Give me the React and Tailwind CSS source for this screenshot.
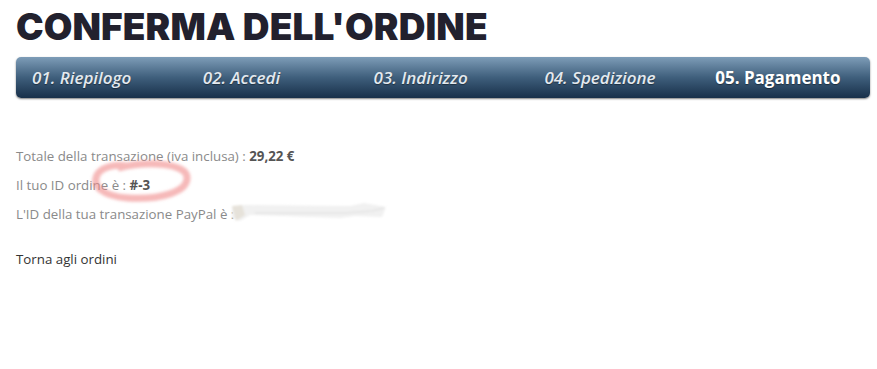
export default function App() {
  const steps = [
    { t: "01. Riepilogo", active: false },
    { t: "02. Accedi", active: false },
    { t: "03. Indirizzo", active: false },
    { t: "04. Spedizione", active: false },
    { t: "05. Pagamento", active: true },
  ];
  const body = { fontFamily: '"Open Sans", "Noto Sans", sans-serif' };
  return (
    <div className="relative w-[877px] h-[369px] bg-white overflow-hidden" style={body}>
      <div className="pl-4 pr-[7px] pt-[8px]">
        <h1
          className="text-[37px] leading-[38px] font-black tracking-[0.1px] text-[#22212e]"
          style={{ fontFamily: 'Inter, "Liberation Sans", sans-serif' }}
        >
          CONFERMA DELL'ORDINE
        </h1>
        <div className="mt-[11px] h-[41px] rounded-[5px] bg-gradient-to-b from-[#7e9db8] via-[#3f5f7c] to-[#18304a] shadow-[0_1px_2px_rgba(0,0,0,0.5)] grid grid-cols-5 items-center">
          {steps.map((s) => (
            <div
              key={s.t}
              className={
                "pl-4 text-[17px] " +
                (s.active ? "font-bold text-white" : "italic font-semibold text-[#e3e9ef]")
              }
              style={{ textShadow: "0 1px 1px rgba(0,0,0,0.4)" }}
            >
              {s.t}
            </div>
          ))}
        </div>
        <div className="mt-[44px] text-[13.3px] leading-[29px] text-[#8a8a8a]">
          <div>
            Totale della transazione (iva inclusa) : <b className="text-[#555]">29,22 €</b>
          </div>
          <div>
            Il tuo ID ordine è : <b className="text-[#555]">#-3</b>
          </div>
          <div>L'ID della tua transazione PayPal è :</div>
          <div className="mt-[16px] text-[#333]">Torna agli ordini</div>
        </div>
      </div>
      <svg className="absolute left-0 top-0 pointer-events-none" width="877" height="369">
        <defs>
          <filter id="blur" x="-20%" y="-20%" width="140%" height="140%">
            <feGaussianBlur stdDeviation="1.8" />
          </filter>
          <filter id="blur2" x="-20%" y="-50%" width="140%" height="200%">
            <feGaussianBlur stdDeviation="0.8" />
          </filter>
        </defs>
        <path
          d="M118 168 C 150 160, 186 164, 187 177 C 188 192, 160 200, 128 198 C 102 196, 92 186, 97 175 C 101 167, 115 164, 126 166"
          fill="none"
          stroke="#f08a8a"
          strokeOpacity="0.6"
          strokeWidth="7"
          filter="url(#blur)"
        />
        <g filter="url(#blur2)">
          <path
            d="M232 207 L 245 205 L 350 206 L 364 203 L 386 207 L 382 217 L 355 216 L 340 218 L 250 215 L 240 221 L 232 218 Z"
            fill="#f1f1f1"
          />
          <path d="M232 206 L 242 205 L 245 215 L 236 221 Z" fill="#e6e2da" />
          <path d="M255 213 L 345 213 L 372 211 L 384 208" fill="none" stroke="#e4e4e4" strokeWidth="1.5" />
        </g>
      </svg>
    </div>
  );
}
